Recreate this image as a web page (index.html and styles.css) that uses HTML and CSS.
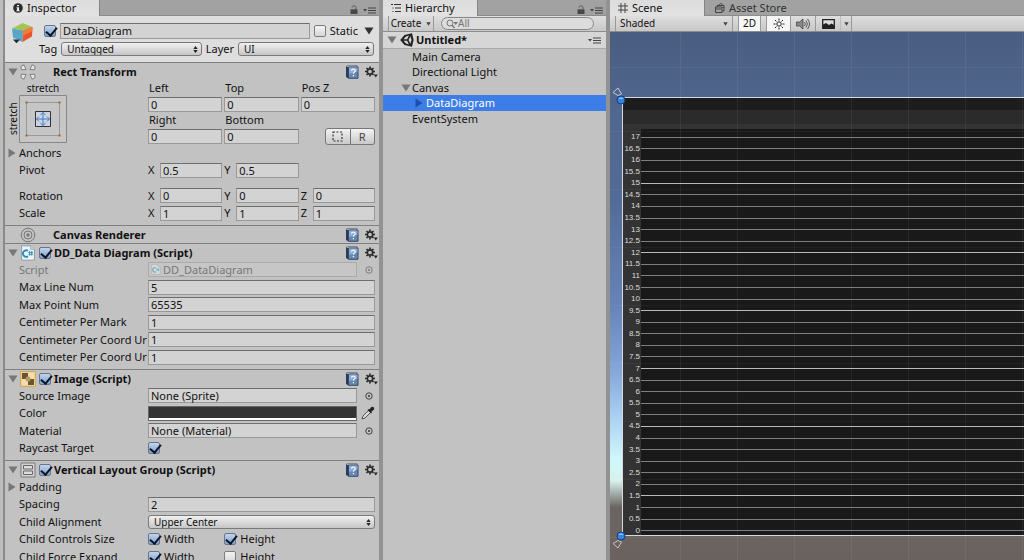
FILE: index.html
```html
<!DOCTYPE html>
<html lang="en">
<head>
	<meta charset="utf-8">
	<title>Untitled - DataDiagram</title>
	<meta name="viewport" content="width=device-width, initial-scale=1">
	<link rel="stylesheet" href="styles.css">
</head>
<body>
	<!-- shared icons -->
	<svg class="defs" aria-hidden="true">
		<symbol id="i-help" viewBox="0 0 14 14">
			<path d="M1 1.5 2.5.5h9.500v1.500H3z" fill="#e8edf2" stroke="#5c6676" stroke-width=".7"/>
			<path d="M1 1.500 3.500 2.500v11L1 12z" fill="#2b3c58"/>
			<path d="M3.500 2h9.500v11.300H3.500z" fill="#6688b5" stroke="#2d4062" stroke-width=".9"/>
			<path d="M4 2.500h8.500v4L4 9z" fill="#8eabd0"/>
			<path d="M6.500 5.800c0-2.300 3.700-2.200 3.700-.1 0 1.500-1.800 1.300-1.800 3M8.400 10v1.200" fill="none" stroke="#f4f8ff" stroke-width="1.200"/>
		</symbol>
		<symbol id="i-gear" viewBox="0 0 14 12">
			<g stroke="#2b2b2b" fill="none">
				<circle cx="6" cy="5.500" r="2.700" stroke-width="1.700"/>
				<path d="M6 .5v2M6 8.500v2M1 5.500h2M9 5.500h2M2.500 2 4 3.500M8 7.500 9.500 9M9.500 2 8 3.500M4 7.500 2.500 9" stroke-width="1.700"/>
			</g>
			<path d="M9.800 8.500h4L11.800 11.500z" fill="#222"/>
		</symbol>
		<symbol id="i-down" viewBox="0 0 10 8"><path d="M.5.500h9L5 7.500z"/></symbol>
		<symbol id="i-right" viewBox="0 0 8 10"><path d="M.5.500v9L7.500 5z"/></symbol>
		<symbol id="i-updown" viewBox="0 0 5 7"><path d="M2.500 0 4.700 3H.3zM2.500 7 .3 4h4.400z"/></symbol>
		<symbol id="i-menu" viewBox="0 0 13 7"><path d="M0 2h4L2 4.500zM5 .5h8v1H5zM5 3h8v1H5zM5 5.500h8v1H5z" fill="#444"/></symbol>
		<symbol id="i-lock" viewBox="0 0 8 9">
			<path d="M2 2.500C2 .3 6 .3 6 2.500v2" fill="none" stroke="#555"/>
			<path d="M.5 4.300h7V9h-7z" fill="#484848"/>
		</symbol>
		<symbol id="i-pick" viewBox="0 0 8 8">
			<circle cx="4" cy="4" r="3.200" fill="none" stroke="currentColor" stroke-width=".9"/>
			<circle cx="4" cy="4" r="1" fill="currentColor"/>
		</symbol>
		<symbol id="i-script" viewBox="0 0 14 15">
			<path d="M1 .8h8.500L13 4v10.200H1z" fill="#edf3f6" stroke="#8c9aa3" stroke-width=".9"/>
			<path d="M9.500.8V4H13" fill="#cfd9df" stroke="#8c9aa3" stroke-width=".7"/>
			<path d="M7 5.500a3 3 0 1 0 0 5" fill="none" stroke="#278bb5" stroke-width="1.700"/>
			<path d="M8.500 5.500v4.500M10.500 5.500v4.500M7.300 7h4.500M7.300 8.700h4.500" stroke="#278bb5" stroke-width=".8"/>
		</symbol>
	</svg>

	<div class="editor">
		<section class="panel inspector">
			<header class="tabs">
				<span class="tab active">
					<svg class="tab-icon" viewBox="0 0 10 10"><circle cx="5" cy="5" r="4.800" fill="#2c2c2c"/><path d="M4 2h2v1.300H4zM3.500 4.200H6v3h.7v1H3.400v-1H4V5.200h-.5z" fill="#eee"/></svg>
					Inspector
				</span>
				<span class="tab-tools">
					<svg class="lock"><use href="#i-lock"/></svg>
					<svg class="menu"><use href="#i-menu"/></svg>
				</span>
			</header>

			<div class="object">
				<svg class="cube" viewBox="0 0 22 22">
					<path d="M1 6.500 11.500 1 21.500 5 12 8.500z" fill="#a5c457"/>
					<path d="M1 6.500 12 8.500 11.500 20 2 15.500z" fill="#5aa6c9"/>
					<path d="M12 8.500 21.500 5 21 14.500 11.500 20z" fill="#e5562d"/>
					<path d="M12 8.500 21.500 5l-.2 4L11.800 14z" fill="#ef7b3c"/>
					<path d="M2 17.500h7l-3.500 3.700z" fill="#1d2a33"/>
				</svg>
				<div class="object-rows">
					<div class="object-name">
						<input type="checkbox" class="check" aria-label="Active" checked>
						<input type="text" class="field" aria-label="Name" value="DataDiagram">
						<input type="checkbox" class="check" id="static">
						<label for="static">Static</label>
						<svg class="fold dark"><use href="#i-down"/></svg>
					</div>
					<div class="object-tag">
						<label for="tag">Tag</label>
						<span class="popup"><select id="tag"><option>Untagged</option></select><svg><use href="#i-updown"/></svg></span>
						<label for="layer">Layer</label>
						<span class="popup"><select id="layer"><option>UI</option></select><svg><use href="#i-updown"/></svg></span>
					</div>
				</div>
			</div>

			<div class="component">
				<h2 class="title">
					<svg class="fold"><use href="#i-down"/></svg>
					<svg class="icon" viewBox="0 0 16 16"><path d="M.8 2.500 4 .8 6 5.500l-4.500.3zM15.200 2.500 12 .8 10 5.500l4.500.3zM.8 13.500 4 15.200 6 10.500l-4.500-.3zM15.200 13.500 12 15.200 10 10.500l4.500-.3z" fill="#e6e6e6" stroke="#777" stroke-width=".9"/></svg>
					<span class="name">Rect Transform</span>
					<svg class="help"><use href="#i-help"/></svg>
					<svg class="gear"><use href="#i-gear"/></svg>
				</h2>
				<div class="rect">
					<div class="anchor">
						<span class="anchor-top">stretch</span>
						<span class="anchor-side">stretch</span>
						<svg class="anchor-box" viewBox="0 0 48 48">
							<path d="M.5.500h47v47H.5z" fill="#c6c6c6" stroke="#868686"/>
							<path d="M7.500 7.500h33v33h-33z" fill="none" stroke="#999"/>
							<path d="M6.500 6.500h2v2h-2zM39.500 6.500h2v2h-2zM6.500 39.500h2v2h-2zM39.500 39.500h2v2h-2z" fill="#9b6b1d"/>
							<path d="M16.500 16.500h15v15h-15z" fill="#ccd4df" stroke="#333"/>
							<path d="M24 17.500v13M17.500 24h13M21.500 20 24 17.500l2.500 2.500M21.500 28l2.500 2.500 2.500-2.500M20 21.500 17.500 24l2.500 2.500M28 21.500l2.500 2.500-2.500 2.500" fill="none" stroke="#3f7cc9"/>
						</svg>
					</div>
					<div class="rect-grid">
						<label for="left">Left</label>
						<label for="top">Top</label>
						<label for="posz">Pos Z</label>
						<input type="text" class="field" id="left" value="0">
						<input type="text" class="field" id="top" value="0">
						<input type="text" class="field" id="posz" value="0">
						<label for="right">Right</label>
						<label for="bottom">Bottom</label>
						<span></span>
						<input type="text" class="field" id="right" value="0">
						<input type="text" class="field" id="bottom" value="0">
						<div class="modes">
							<button type="button" aria-label="Blueprint mode"><svg viewBox="0 0 11 11"><path d="M1 1h9v9H1z" fill="none" stroke="#333" stroke-width="1.200" stroke-dasharray="2 1.500"/></svg></button>
							<button type="button">R</button>
						</div>
					</div>
				</div>
				<div class="rows">
					<div class="row"><span class="label foldout"><svg class="fold side"><use href="#i-right"/></svg>Anchors</span></div>
					<div class="row">
						<span class="label">Pivot</span>
						<div class="axes xyz">
							<label>X <input type="text" class="field" value="0.5"></label>
							<label>Y <input type="text" class="field" value="0.5"></label>
						</div>
					</div>
				</div>
				<div class="rows spaced">
					<div class="row">
						<span class="label">Rotation</span>
						<div class="axes xyz">
							<label>X <input type="text" class="field" value="0"></label>
							<label>Y <input type="text" class="field" value="0"></label>
							<label>Z <input type="text" class="field" value="0"></label>
						</div>
					</div>
					<div class="row">
						<span class="label">Scale</span>
						<div class="axes xyz">
							<label>X <input type="text" class="field" value="1"></label>
							<label>Y <input type="text" class="field" value="1"></label>
							<label>Z <input type="text" class="field" value="1"></label>
						</div>
					</div>
				</div>
			</div>

			<div class="component flat">
				<h2 class="title">
					<span class="fold"></span>
					<svg class="icon" viewBox="0 0 16 16"><g fill="none" stroke="#777"><circle cx="8" cy="8" r="6.800"/><circle cx="8" cy="8" r="4"/></g><circle cx="8" cy="8" r="1.700" fill="#777"/></svg>
					<span class="name">Canvas Renderer</span>
					<svg class="help"><use href="#i-help"/></svg>
					<svg class="gear"><use href="#i-gear"/></svg>
				</h2>
			</div>

			<div class="component">
				<h2 class="title">
					<svg class="fold"><use href="#i-down"/></svg>
					<svg class="icon"><use href="#i-script"/></svg>
					<input type="checkbox" class="check" aria-label="DD_Data Diagram enabled" checked>
					<span class="name">DD_Data Diagram (Script)</span>
					<svg class="help"><use href="#i-help"/></svg>
					<svg class="gear"><use href="#i-gear"/></svg>
				</h2>
				<div class="rows">
					<div class="row object-ref disabled">
						<span class="label">Script</span>
						<span class="field ref"><svg class="mini"><use href="#i-script"/></svg>DD_DataDiagram</span>
						<svg class="pick"><use href="#i-pick"/></svg>
					</div>
					<div class="row"><label class="label" for="maxline">Max Line Num</label><input type="text" class="field" id="maxline" value="5"></div>
					<div class="row"><label class="label" for="maxpoint">Max Point Num</label><input type="text" class="field" id="maxpoint" value="65535"></div>
					<div class="row"><label class="label" for="cmmark">Centimeter Per Mark</label><input type="text" class="field" id="cmmark" value="1"></div>
					<div class="row"><label class="label" for="cmx">Centimeter Per Coord Ur</label><input type="text" class="field" id="cmx" value="1"></div>
					<div class="row"><label class="label" for="cmy">Centimeter Per Coord Ur</label><input type="text" class="field" id="cmy" value="1"></div>
				</div>
			</div>

			<div class="component">
				<h2 class="title">
					<svg class="fold"><use href="#i-down"/></svg>
					<svg class="icon" viewBox="0 0 16 16"><path d="M.5.500h15v15H.5z" fill="#e9cf98" stroke="#d9a95b"/><path d="M2 2h6v6H2zM8 8h6v6H8z" fill="#6b5530"/><path d="M8 2h6v6H8zM2 8h6v6H2z" fill="#f0ddb0"/><circle cx="8" cy="8" r="2.500" fill="#b99b62"/></svg>
					<input type="checkbox" class="check" aria-label="Image enabled" checked>
					<span class="name">Image (Script)</span>
					<svg class="help"><use href="#i-help"/></svg>
					<svg class="gear"><use href="#i-gear"/></svg>
				</h2>
				<div class="rows">
					<div class="row object-ref">
						<span class="label">Source Image</span>
						<span class="field ref">None (Sprite)</span>
						<svg class="pick"><use href="#i-pick"/></svg>
					</div>
					<div class="row object-ref">
						<span class="label">Color</span>
						<button type="button" class="swatch" aria-label="Color"></button>
						<svg class="dropper" viewBox="0 0 14 14"><path d="m1 13 1-3 5.500-5.500 2 2L4 12z" fill="#ddd" stroke="#444" stroke-width=".9"/><path d="m7 3.500 3.500 3.500M8.500 4.500l2-2.500c1-1.300 2.800.5 1.500 1.500L9.500 5.500z" fill="#222" stroke="#222" stroke-width="1.500"/></svg>
					</div>
					<div class="row object-ref">
						<span class="label">Material</span>
						<span class="field ref">None (Material)</span>
						<svg class="pick"><use href="#i-pick"/></svg>
					</div>
					<div class="row"><label class="label" for="raycast">Raycast Target</label><input type="checkbox" class="check" id="raycast" checked></div>
				</div>
			</div>

			<div class="component">
				<h2 class="title">
					<svg class="fold"><use href="#i-down"/></svg>
					<svg class="icon" viewBox="0 0 16 16"><path d="M1 1h14v14H1z" fill="#d4d4d4" stroke="#777"/><path d="M3.500 3.500h9v3.500h-9zM3.500 9h9v3.500h-9z" fill="#ddd" stroke="#666"/></svg>
					<input type="checkbox" class="check" aria-label="Vertical Layout Group enabled" checked>
					<span class="name">Vertical Layout Group (Script)</span>
					<svg class="help"><use href="#i-help"/></svg>
					<svg class="gear"><use href="#i-gear"/></svg>
				</h2>
				<div class="rows">
					<div class="row"><span class="label foldout"><svg class="fold side"><use href="#i-right"/></svg>Padding</span></div>
					<div class="row"><label class="label" for="spacing">Spacing</label><input type="text" class="field" id="spacing" value="2"></div>
					<div class="row">
						<label class="label" for="align">Child Alignment</label>
						<span class="popup"><select id="align"><option>Upper Center</option></select><svg><use href="#i-updown"/></svg></span>
					</div>
					<div class="row">
						<span class="label">Child Controls Size</span>
						<div class="axes">
							<label><input type="checkbox" class="check" checked>Width</label>
							<label><input type="checkbox" class="check" checked>Height</label>
						</div>
					</div>
					<div class="row">
						<span class="label">Child Force Expand</span>
						<div class="axes">
							<label><input type="checkbox" class="check" checked>Width</label>
							<label><input type="checkbox" class="check">Height</label>
						</div>
					</div>
				</div>
			</div>
		</section>

		<section class="panel hierarchy">
			<header class="tabs">
				<span class="tab active">
					<svg class="tab-icon" viewBox="0 0 10 10"><path d="M0 1h2v1H0zM3 1h7v1H3zM1.500 4.500h1v1h-1zM4 4.500h6v1H4zM1.500 8h1v1h-1zM4 8h6v1H4z" fill="#333"/></svg>
					Hierarchy
				</span>
				<span class="tab-tools">
					<svg class="lock"><use href="#i-lock"/></svg>
					<svg class="menu"><use href="#i-menu"/></svg>
				</span>
			</header>
			<div class="toolbar">
				<button type="button" class="tool create">Create <svg class="caret"><use href="#i-down"/></svg></button>
				<span class="search">
					<svg viewBox="0 0 12 10"><circle cx="4" cy="4" r="3" fill="none" stroke="#777"/><path d="m6 6 2.500 3" stroke="#777" stroke-width="1.300"/><path d="M7.500 3H12L9.700 6z" fill="#777"/></svg>
					<input type="search" aria-label="Search hierarchy" placeholder="All">
				</span>
			</div>
			<div class="scene-row">
				<svg class="fold"><use href="#i-down"/></svg>
				<svg class="unity" viewBox="0 0 14 14">
					<path d="M.2 7 4.500 2 12 .3 13.600 7 12 13.700l-7.500-1.700z" fill="#222"/>
					<path d="M3.500 6.200 6 3.500l3-.9-1.900 3.600zM3.500 7.800 6 10.500l3 .9-1.900-3.600zM8.500 7l2-3.700 1 3.700-1 3.700z" fill="#d5d5d5"/>
				</svg>
				<span class="name">Untitled*</span>
				<svg class="menu"><use href="#i-menu"/></svg>
			</div>
			<ul class="tree">
				<li>Main Camera</li>
				<li>Directional Light</li>
				<li><svg class="fold"><use href="#i-down"/></svg>Canvas</li>
				<li class="child selected"><svg class="fold side"><use href="#i-right"/></svg>DataDiagram</li>
				<li>EventSystem</li>
			</ul>
		</section>

		<section class="panel scene">
			<header class="tabs">
				<span class="tab active">
					<svg class="tab-icon" viewBox="0 0 10 10"><path d="M3 0v10M7 0v10M0 3h10M0 7h10" stroke="#444" fill="none"/></svg>
					Scene
				</span>
				<span class="tab store">
					<svg class="tab-icon" viewBox="0 0 10 10"><path d="M.5 4h6.500v5.500H.5zM2 4V2.500h7V8H7M4 2.500C4 0 7.500 0 7.500 2.500" fill="none" stroke="#444"/><path d="M1 6h5.500M7.500 4.500H9" stroke="#444"/></svg>
					Asset Store
				</span>
			</header>
			<div class="toolbar">
				<button type="button" class="tool shaded">Shaded <svg class="caret"><use href="#i-down"/></svg></button>
				<button type="button" class="tool on mode">2D</button>
				<button type="button" class="tool on light" aria-label="Lighting"><svg viewBox="0 0 12 12"><circle cx="6" cy="6" r="2.200" fill="none" stroke="#222"/><path d="M6 .5v2M6 9.500v2M.5 6h2M9.500 6h2M2 2l1.400 1.400M8.600 8.600 10 10M10 2 8.600 3.400M3.400 8.600 2 10" stroke="#222"/></svg></button>
				<button type="button" class="tool audio" aria-label="Audio"><svg viewBox="0 0 14 12"><path d="M.5 4h3L7 1v10L3.500 8h-3z" fill="#888" stroke="#444" stroke-width=".8"/><path d="M8.500 4q1.500 2 0 4M10 2.500q2.800 3.500 0 7M11.500 1q4 5 0 10" fill="none" stroke="#444" stroke-width=".9"/></svg></button>
				<button type="button" class="tool effects" aria-label="Effects"><svg viewBox="0 0 13 10"><path d="M.7.700h11.600v8.600H.7z" fill="#ddd" stroke="#222" stroke-width="1.300"/><path d="M1 5.500 4 4l3 2 2.500-1.500L12 6v3.300H1z" fill="#222"/></svg></button>
				<button type="button" class="tool more" aria-label="Effects menu"><svg class="caret"><use href="#i-down"/></svg></button>
			</div>
			<div class="view">
				<div class="diagram">
					<div class="band"></div>
					<div class="band second"></div>
					<ol class="plot">
						<li>17</li>
						<li>16.5</li>
						<li>16</li>
						<li>15.5</li>
						<li class="strong">15</li>
						<li>14.5</li>
						<li>14</li>
						<li>13.5</li>
						<li>13</li>
						<li>12.5</li>
						<li class="strong">12</li>
						<li>11.5</li>
						<li>11</li>
						<li>10.5</li>
						<li>10</li>
						<li class="strong">9.5</li>
						<li>9</li>
						<li>8.5</li>
						<li>8</li>
						<li>7.5</li>
						<li class="strong">7</li>
						<li>6.5</li>
						<li>6</li>
						<li>5.5</li>
						<li>5</li>
						<li class="strong">4.5</li>
						<li>4</li>
						<li>3.5</li>
						<li>3</li>
						<li>2.5</li>
						<li>2</li>
						<li class="strong">1.5</li>
						<li>1</li>
						<li>0.5</li>
						<li>0</li>
					</ol>
					<svg class="handle start" viewBox="0 0 14 18"><path d="M1 5.500 6 1l3.500 6L6 8.500z" fill="none" stroke="#c3cbdc"/><circle cx="9" cy="13" r="4" fill="#3583e0" stroke="#173d7d"/><path d="M6.500 12a2.700 2.700 0 0 1 5 0z" fill="#8fbdf5"/></svg>
					<svg class="handle end" viewBox="0 0 14 18"><path d="M1 12.500 6 17l3.500-6L6 9.500z" fill="none" stroke="#c9c4bc"/><circle cx="9" cy="5" r="4" fill="#3583e0" stroke="#173d7d"/><path d="M6.500 4a2.700 2.700 0 0 1 5 0z" fill="#8fbdf5"/></svg>
				</div>
			</div>
		</section>
	</div>
</body>
</html>
```

FILE: styles.css
```css
* { box-sizing: border-box; }

html, body { height: 100%; margin: 0; }

body {
  overflow: hidden;
  background: #a2a2a2;
  color: #111;
  font-family: "Noto Sans", "Open Sans", sans-serif;
  font-size: 11px;
  line-height: 16px;
}

button, input, select { margin: 0; padding: 0; font: inherit; color: inherit; }
svg { display: block; flex: none; }
.defs { position: absolute; width: 0; height: 0; }

.editor {
  display: grid;
  grid-template-columns: 374fr 223fr 414fr;
  gap: 4px;
  height: 100vh;
  padding-left: 5px;
  background: linear-gradient(to right, #bdbdbd 3px, #8a8a8a 3px, #8a8a8a 5px, #929292 5px);
}

.panel {
  display: flex;
  flex-direction: column;
  min-width: 0;
  overflow: hidden;
  background: #c2c2c2;
}

/* tabs */
.tabs {
  display: flex;
  flex: none;
  height: 16px;
  background: #a2a2a2;
  border-bottom: 1px solid #8b8b8b;
}

.tab {
  display: flex;
  align-items: center;
  gap: 4px;
  width: 95px;
  padding-left: 8px;
  color: #333;
  white-space: nowrap;
}

.tab.active {
  height: 16px;
  color: #111;
  background: linear-gradient(#dcdcdc, #e2e2e2);
  border-right: 1px solid #858585;
}

.tab.store { padding-left: 10px; }

.tab-icon { width: 10px; height: 10px; }
.tab-tools { display: flex; gap: 5px; align-items: flex-end; margin-left: auto; padding: 0 3px 1px 0; }
.lock { width: 8px; height: 9px; }
.menu { width: 13px; height: 7px; }

/* controls */
.field {
  display: block;
  width: 100%;
  min-width: 0;
  height: 15px;
  padding: 0 2px;
  line-height: 13px;
  background: #d3d3d3;
  border: 1px solid #999;
  border-top-color: #6e6e6e;
  border-radius: 0;
  outline: none;
}

.check {
  appearance: none;
  position: relative;
  flex: none;
  width: 12px;
  height: 12px;
  background: linear-gradient(#f4f4f4, #d6d6d6);
  border: 1px solid #7d7d7d;
  border-radius: 2px;
}

.check:checked { background: linear-gradient(#c3d4ea, #7fa0cc); border-color: #66768e; }

.check:checked::after {
  content: "";
  position: absolute;
  left: 3px;
  top: -1px;
  width: 5px;
  height: 9px;
  border: solid #0c1426;
  border-width: 0 2px 2px 0;
  transform: rotate(40deg);
}

.popup { position: relative; display: block; flex: 1; min-width: 0; }

.popup select {
  appearance: none;
  display: block;
  width: 100%;
  height: 14px;
  padding: 0 5px;
  font-size: 10px;
  line-height: 12px;
  background: linear-gradient(#f0f0f0, #c6c6c6);
  border: 1px solid #7a7a7a;
  border-radius: 3px;
}

.popup svg { position: absolute; right: 4px; top: 4px; width: 5px; height: 7px; fill: #222; }

.fold { width: 10px; height: 8px; fill: #777; }
.fold.side { width: 8px; height: 10px; }
.fold.dark { fill: #333; }

/* inspector */
.object {
  display: flex;
  flex: none;
  height: 46px;
  padding: 6px 5px 0 6px;
  background: #dedede;
}

.cube { width: 22px; height: 22px; }
.object-rows { flex: 1; min-width: 0; padding-left: 6px; }
.object-name { display: flex; align-items: center; gap: 4px; height: 17px; padding-left: 5px; }
.object-name .field { flex: 1; height: 16px; line-height: 14px; }
.object-name .fold { margin-left: 2px; }
.object-tag { display: flex; align-items: center; gap: 4px; height: 20px; }
.object-tag .popup:last-child { flex: 0 1 136px; }

.component { flex: none; padding-bottom: 3px; border-top: 1px solid #7f7f7f; }
.component.flat { padding-bottom: 0; }

.title {
  display: flex;
  align-items: center;
  gap: 2px;
  height: 17px;
  margin: 0;
  padding: 0 1px 0 3px;
  font-size: 11px;
  font-weight: bold;
  white-space: nowrap;
}

.title .icon { width: 16px; height: 16px; }
.title .name { flex: 1; }
.title .check { margin: 0 1px; }
.title .icon + .name { padding-left: 15px; }
.help { width: 14px; height: 14px; }
.gear { width: 14px; height: 12px; }
.title .gear { margin-left: 3px; }

.rect { display: grid; grid-template-columns: 129px 1fr; padding: 0 4px 0 14px; }
.anchor { display: grid; grid-template-columns: 48px; grid-template-rows: 15px 48px; position: relative; }
.anchor-top { font-size: 10px; text-align: center; }

.anchor-side {
  position: absolute;
  left: -13px;
  top: 15px;
  height: 48px;
  font-size: 10px;
  line-height: 14px;
  text-align: center;
  writing-mode: vertical-rl;
  transform: rotate(180deg);
}

.anchor-box { width: 48px; height: 48px; }

.rect-grid {
  display: grid;
  grid-template-columns: repeat(3, 1fr);
  grid-auto-rows: 16px;
  column-gap: 2px;
  align-items: center;
  min-width: 0;
}

.rect-grid label { padding-left: 1px; }

.modes { display: flex; justify-self: end; width: 50px; }

.modes button {
  display: grid;
  place-items: center;
  flex: 1;
  height: 17px;
  color: #444;
  background: linear-gradient(#f2f2f2, #c9c9c9);
  border: 1px solid #777;
  border-radius: 3px 0 0 3px;
}

.modes button + button { border-left: 0; border-radius: 0 3px 3px 0; }
.modes svg { width: 11px; height: 11px; }

.rows { padding: 0 4px 0 14px; }
.rows.spaced { padding-top: 8px; }

.row {
  display: grid;
  grid-template-columns: 129px 1fr;
  align-items: center;
  height: 17px;
}

.row:nth-child(even) { height: 18px; }
.row.object-ref { grid-template-columns: 129px 1fr 18px; }

.label { overflow: hidden; white-space: nowrap; }
.label.foldout { display: flex; align-items: center; gap: 3px; margin-left: -11px; }

.axes { display: grid; grid-template-columns: repeat(3, 1fr); gap: 2px; }
.axes label { display: flex; align-items: center; gap: 4px; min-width: 0; }
.axes.xyz label { display: grid; grid-template-columns: 12px 1fr; gap: 0; }

.ref { display: flex; align-items: center; gap: 2px; white-space: nowrap; }
.mini { width: 10px; height: 11px; opacity: .5; }
.pick { width: 8px; height: 8px; justify-self: end; margin-right: 2px; color: #333; }
.disabled { color: #777; }
.disabled .field { background: #c6c6c6; border-color: #aaa; }
.disabled .pick { color: #777; }

.swatch {
  height: 15px;
  background: linear-gradient(#333 11px, #fff 11px);
  border: 1px solid #666;
}

.dropper { width: 14px; height: 14px; justify-self: end; }

/* toolbars */
.toolbar {
  display: flex;
  flex: none;
  height: 16px;
  padding-left: 5px;
  background: linear-gradient(#dedede, #c8c8c8);
  border-bottom: 1px solid #8d8d8d;
}

.tool {
  display: flex;
  align-items: center;
  justify-content: center;
  font-size: 10px;
  line-height: 15px;
  background: none;
  border: 0;
  border-right: 1px solid #999;
}

.tool.on { background: #f6f6f6; }
.caret { width: 5px; height: 4px; fill: #444; }

.create { gap: 5px; width: 46px; border-left: 1px solid #999; }

.search {
  display: flex;
  align-items: center;
  flex: 1;
  min-width: 0;
  height: 13px;
  margin: 1px 12px 0 7px;
  padding-left: 4px;
  background: #dcdcdc;
  border: 1px solid #888;
  border-radius: 7px;
}

.search svg { width: 12px; height: 10px; }

.search input {
  flex: 1;
  min-width: 0;
  height: 11px;
  font-size: 10px;
  line-height: 11px;
  background: none;
  border: 0;
  outline: none;
}

.search input::placeholder { color: #777; opacity: 1; }

/* hierarchy */
.scene-row {
  display: flex;
  align-items: center;
  gap: 2px;
  flex: none;
  height: 17px;
  padding: 0 5px 0 4px;
  font-weight: bold;
  background: #d6d6d6;
  border-bottom: 1px solid #aaa;
}

.unity { width: 14px; height: 14px; margin-left: 1px; }
.scene-row .name { flex: 1; }

.tree { margin: 0; padding: 0; list-style: none; }

.tree li {
  display: flex;
  align-items: center;
  height: 15px;
  padding-left: 29px;
}

.tree li:nth-child(even) { height: 16px; }
.tree .fold { margin: 0 1px 0 -11px; }
.tree .child { padding-left: 43px; }
.tree .fold.side { margin: 0 3px 0 -11px; }
.tree .selected { color: #fff; background: #3d7de7; }
.tree .selected .fold { fill: #1f4fa8; }

/* scene */
.shaded { justify-content: space-between; width: 118px; padding: 0 4px 0 4px; border-left: 1px solid #999; }
.mode { width: 23px; margin-left: 5px; border-left: 1px solid #999; }
.light { width: 25px; margin-left: 5px; border-left: 1px solid #999; }
.light svg { width: 12px; height: 12px; }
.audio { width: 25px; }
.audio svg { width: 14px; height: 12px; }
.effects { width: 25px; border-right-color: #bbb; }
.effects svg { width: 13px; height: 10px; }
.more { width: 11px; }

.view {
  position: relative;
  display: flex;
  flex: 1;
  min-height: 0;
  padding: 65px 0 24px 12px;
  background: linear-gradient(#495d81, #51668d 14%, #536b98 32%, #6784b8 52%, #84a6d8 64%, #a6ccf2 72%, #d0f8fc 81%, #d8f0ea 85%, #6b6562 90%, #6b625e);
}

/* grid of the scene camera, drawn over everything in the view */
.view::after {
  content: "";
  position: absolute;
  inset: 0;
  background:
    repeating-linear-gradient(to right, transparent 0 56px, rgba(255, 255, 255, .06) 56px 57px) 14px 0,
    repeating-linear-gradient(transparent 0 57px, rgba(255, 255, 255, .04) 57px 58px) 0 42px;
  pointer-events: none;
}

.diagram {
  position: relative;
  display: flex;
  flex: 1;
  flex-direction: column;
  min-width: 0;
  background: #333;
  border: 1px solid #d5dae2;
  border-right: 0;
}

.band { flex: none; height: 12px; background: #1d1d1d; }
.band.second { height: 14px; background: #2b2b2b; }

.plot {
  display: flex;
  flex: 1;
  flex-direction: column;
  justify-content: space-between;
  min-height: 0;
  margin: 5px 0 0;
  padding: 4px 0 0;
  list-style: none;
  font-family: "Liberation Sans", Arial, sans-serif;
  font-size: 8px;
  line-height: 8px;
  color: #ddd;
  background: linear-gradient(to right, #333 18px, #191919 18px);
  text-align: right;
}

.plot li {
  display: grid;
  grid-template-columns: 17px 1fr;
  column-gap: 1px;
  align-items: center;
  height: 8px;
}

.plot li::after { content: ""; height: 1px; background: #7e7e7e; }
.plot .strong::after { background: #bbb; }

.handle { position: absolute; left: -11px; width: 14px; height: 18px; }
.handle.start { top: -11px; }
.handle.end { bottom: -14px; }
```
